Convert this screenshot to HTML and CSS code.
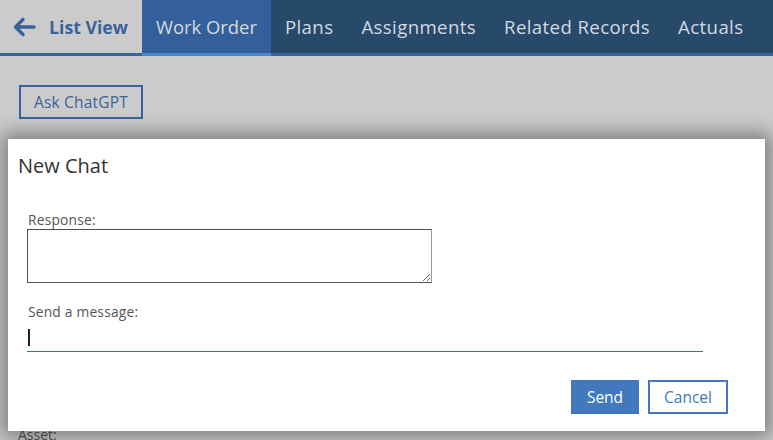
FILE: index.html
```html
<!DOCTYPE html>
<html>
<head>
<meta charset="utf-8">
<link rel="stylesheet" href="styles.css">
</head>
<body>
<header class="nav">
  <div class="back">
    <svg class="arrow" width="24" height="20" viewBox="0 0 24 20"><path d="M22 10H4M11 2.5L3.5 10L11 17.5" fill="none" stroke="#3a639b" stroke-width="3.4" stroke-linecap="round" stroke-linejoin="round"/></svg>
    <span>List View</span>
  </div>
  <nav class="tabs">
    <div class="tab active">Work Order</div>
    <div class="tab">Plans</div>
    <div class="tab">Assignments</div>
    <div class="tab">Related Records</div>
    <div class="tab">Actuals</div>
  </nav>
</header>
<main class="content">
  <button class="ask">Ask ChatGPT</button>
  <div class="field-label">Asset:</div>
</main>
<div class="modal">
  <h2 class="title">New Chat</h2>
  <div class="body">
    <label class="lbl">Response:</label>
    <textarea class="response"></textarea>
    <label class="lbl msg-lbl">Send a message:</label>
    <div class="input"><span class="caret"></span></div>
    <div class="actions">
      <button class="send">Send</button>
      <button class="cancel">Cancel</button>
    </div>
  </div>
</div>
</body>
</html>
```
FILE: styles.css
```css
* { box-sizing: border-box; }
html, body { margin: 0; padding: 0; }
body {
  width: 773px; height: 440px; overflow: hidden;
  background: #cbcbcb;
  font-family: "Open Sans", "Noto Sans", sans-serif;
  position: relative;
}
.nav {
  display: flex; height: 56px;
  border-bottom: 3px solid #3a639b;
}
.back {
  display: flex; align-items: center; gap: 13px;
  padding-left: 12px; width: 142px;
  color: #3a639b; font-weight: 700; font-size: 17.7px;
}
.back .arrow { margin-top: 1px; }
.tabs { display: flex; flex: 1; background: #27496a; }
.tab {
  padding: 0 14px; display: flex; align-items: center;
  color: #d3d9e1; font-size: 18.6px; letter-spacing: 0.4px; height: 53px;
  position: relative;
}
.tab.active { background: #33609a; letter-spacing: 0; font-size: 18.4px; }
.tab.active::after {
  content: ""; position: absolute; left: 0; right: 0; bottom: -3px; height: 3px;
  background: #4a88c9;
}
.content { padding: 29px 19px 0; }
.ask {
  font-family: inherit; font-size: 15.5px; letter-spacing: 0.2px; color: #3a639b;
  background: transparent; border: 2px solid #3a639b;
  height: 34px; width: 124px; padding: 0; margin: 0;
}
.field-label {
  margin-top: 306px; color: #555; font-size: 14px; margin-left: -1px;
}
.modal {
  position: absolute; left: 8px; top: 139px; width: 757px; height: 292px;
  background: #fff;
  box-shadow: 0 0 18px 6px rgba(0,0,0,0.38);
}
.title {
  margin: 0; padding: 13px 10px 0; font-weight: 400; font-size: 20px;
  color: #333; line-height: 28px;
}
.body { padding: 31px 62px 0 19px; display: flex; flex-direction: column; }
.lbl { font-size: 13.8px; letter-spacing: 0.2px; color: #555; line-height: 18px; margin-left: 1px; }
.response {
  width: 405px; height: 54px; margin: 0; resize: both;
  border: 1px solid #4d4d4d; border-right-color: #999; border-bottom-color: #555;
  font-family: inherit;
}
.msg-lbl { margin-top: 20px; }
.input {
  height: 31px; border-bottom: 1px solid #3a6ea5; display: flex; align-items: center;
}
.caret { width: 2px; height: 17px; background: #222; margin-left: 1px; margin-top: 3px; }
.actions {
  display: flex; justify-content: flex-end; gap: 9px; margin-top: 28px; margin-right: -25px;
}
.actions button {
  font-family: inherit; font-size: 15.5px; height: 34px; margin: 0; padding: 0;
}
.send { width: 68px; background: #4178be; color: #fff; border: none; }
.cancel { width: 80px; background: #fff; color: #4178be; border: 2px solid #4178be; }
```
